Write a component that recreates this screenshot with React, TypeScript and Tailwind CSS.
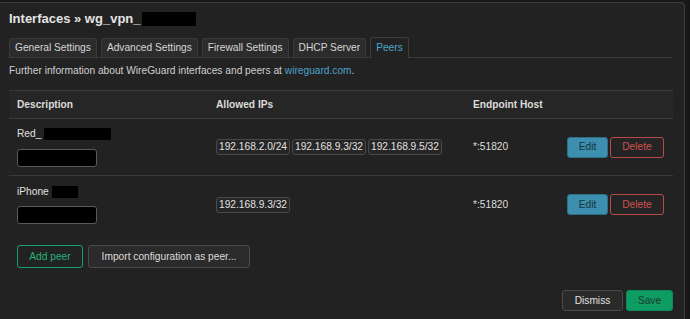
import React from "react";

const font = { fontFamily: '"Liberation Sans", Arial, sans-serif' };

const tabs = [
  { name: "General Settings", active: false },
  { name: "Advanced Settings", active: false },
  { name: "Firewall Settings", active: false },
  { name: "DHCP Server", active: false },
  { name: "Peers", active: true },
];

const peers = [
  { name: "Red_", hide: "w-[67px] ml-[3px]", ips: ["192.168.2.0/24", "192.168.9.3/32", "192.168.9.5/32"], host: "*:51820" },
  { name: "iPhone", hide: "w-[26px] ml-[3px]", ips: ["192.168.9.3/32"], host: "*:51820" },
];

function Chip({ ip }: { ip: string }) {
  return (
    <span className="inline-block h-[16px] px-[2px] leading-[14px] border border-[#4a4a4a] rounded-[3px] bg-[#262626] text-[#e2e2e2] text-[10.2px]">
      {ip}
    </span>
  );
}

export default function App() {
  return (
    <div className="w-[690px] h-[319px] bg-[#171717] overflow-hidden" style={font}>
      <div className="mt-[2px] w-[685px] h-[317px] bg-[#222222] border-t border-r border-[#3e3e3e] rounded-tr-[4px] pl-[9px] pr-[11px]">
        {/* title */}
        <div className="flex items-center h-[14px] mt-[9px]">
          <h2 className="text-[13px] font-bold text-[#e4e4e4] leading-[14px]">Interfaces » wg_vpn_</h2>
          <span className="ml-[1px] w-[54px] h-[14px] bg-black" />
        </div>

        {/* tabs */}
        <div className="mt-[12px] flex items-end gap-[4px] border-b border-[#3a3a3a] h-[20px]">
          {tabs.map((t) =>
            t.active ? (
              <div
                key={t.name}
                className="h-[21px] -mb-px px-[5px] flex items-center border border-b-0 border-[#3e3e3e] rounded-t-[3px] bg-[#222222] text-[#4ea6cd] text-[10.2px]"
              >
                {t.name}
              </div>
            ) : (
              <div
                key={t.name}
                className="h-[19px] px-[5px] flex items-center border border-b-0 border-[#3a3a3a] rounded-t-[3px] bg-[#2c2c2c] text-[#d6d6d6] text-[10.2px]"
              >
                {t.name}
              </div>
            )
          )}
        </div>

        <p className="mt-[7px] text-[10.2px] leading-[12px] text-[#d0d0d0]">
          Further information about WireGuard interfaces and peers at{" "}
          <span className="text-[#4aa2ca]">wireguard.com</span>.
        </p>

        {/* table */}
        <div className="mt-[13px] w-[664px]">
          <div className="flex items-center h-[29px] bg-[#262626] border-y border-[#3a3a3a] text-[10.2px] font-bold text-[#dcdcdc]">
            <div className="w-[207px] pl-[8px]">Description</div>
            <div className="w-[257px]">Allowed IPs</div>
            <div className="flex-1">Endpoint Host</div>
          </div>

          {peers.map((p, i) => (
            <div
              key={p.name}
              className={`flex items-center h-[57px] ${i === 0 ? "border-b border-[#3a3a3a]" : ""}`}
            >
              <div className="w-[207px] pl-[8px] flex flex-col gap-[8px]">
                <div className="flex items-center h-[13px] text-[10.2px] text-[#e0e0e0]">
                  {p.name}
                  <span className={`${p.hide} h-[12px] bg-black`} />
                </div>
                <div className="w-[80px] h-[18px] rounded-[3px] border border-[#5a5a5a] bg-black" />
              </div>
              <div className="w-[257px] flex gap-[2px]">
                {p.ips.map((ip) => (
                  <Chip key={ip} ip={ip} />
                ))}
              </div>
              <div className="flex-1 text-[10.2px] text-[#dedede]">{p.host}</div>
              <div className="flex gap-[2px] pr-[9px]">
                <button className="w-[41px] h-[21px] rounded-[3px] border border-[#2d6e86] bg-[#3c8fae] text-[#17323d] text-[10.2px]">
                  Edit
                </button>
                <button className="w-[54px] h-[21px] rounded-[3px] border border-[#b54a49] bg-[#242424] text-[#d0504f] text-[10.2px]">
                  Delete
                </button>
              </div>
            </div>
          ))}
        </div>

        <div className="mt-[12px] pl-[8px] flex gap-[5px]">
          <button className="w-[66px] h-[23px] rounded-[3px] border border-[#17a06b] bg-[#222222] text-[#22b27a] text-[10.2px]">
            Add peer
          </button>
          <button className="w-[162px] h-[23px] rounded-[3px] border border-[#4a4a4a] bg-[#2b2b2b] text-[#dcdcdc] text-[10.2px]">
            Import configuration as peer...
          </button>
        </div>

        <div className="mt-[22px] w-[664px] flex justify-end gap-[3px]">
          <button className="w-[61px] h-[21px] rounded-[3px] border border-[#4a4a4a] bg-[#2a2a2a] text-[#e0e0e0] text-[10.2px]">
            Dismiss
          </button>
          <button className="w-[47px] h-[21px] rounded-[3px] border border-[#0c8a57] bg-[#0e9c63] text-[#1b3b2d] text-[10.2px]">
            Save
          </button>
        </div>
      </div>
    </div>
  );
}
